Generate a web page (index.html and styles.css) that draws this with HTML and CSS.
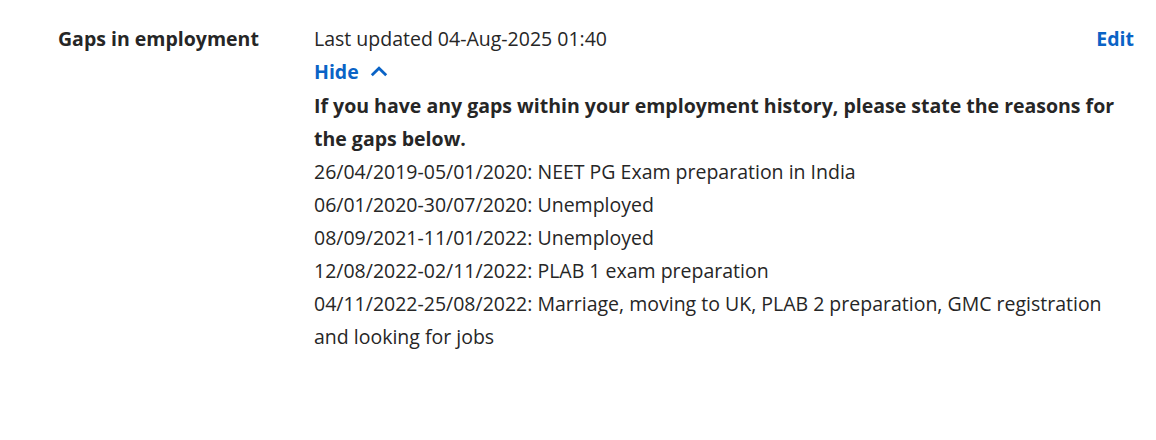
FILE: index.html
```html
<!DOCTYPE html>
<html lang="en">
<head>
<meta charset="utf-8">
<title>Gaps in employment</title>
<link rel="stylesheet" href="styles.css">
</head>
<body>
<dl class="summary">
  <div class="summary-row">
    <dt class="summary-key">Gaps in employment</dt>
    <dd class="summary-value">
      <div class="value-head">
        <span class="updated">Last updated 04-Aug-2025 01:40</span>
        <a class="link edit-link" href="#">Edit</a>
      </div>
      <a class="link toggle" href="#">Hide
        <svg class="chevron" width="18" height="11" viewBox="0 0 18 11" aria-hidden="true"><path d="M1.8 9.2 L9 2.2 L16.2 9.2" fill="none" stroke="currentColor" stroke-width="2.8" stroke-linecap="butt" stroke-linejoin="miter"/></svg>
      </a>
      <p class="question">If you have any gaps within your employment history, please state the reasons for the gaps below.</p>
      <ul class="gaps">
        <li>26/04/2019-05/01/2020: NEET PG Exam preparation in India</li>
        <li>06/01/2020-30/07/2020: Unemployed</li>
        <li>08/09/2021-11/01/2022: Unemployed</li>
        <li>12/08/2022-02/11/2022: PLAB 1 exam preparation</li>
        <li>04/11/2022-25/08/2022: Marriage, moving to UK, PLAB 2 preparation, GMC registration and looking for jobs</li>
      </ul>
    </dd>
  </div>
</dl>
</body>
</html>
```
FILE: styles.css
```css
* { box-sizing: border-box; }
html, body { margin: 0; padding: 0; background: #ffffff; }
body {
  font-family: "Open Sans", "Liberation Sans", Arial, sans-serif;
  font-size: 19.5px;
  line-height: 33px;
  color: #262626;
}
.summary { margin: 0; padding: 22px 22px 0 58px; }
.summary-row { display: flex; }
.summary-key {
  width: 256px;
  flex: none;
  font-weight: 700;
  margin: 0;
}
.summary-value { margin: 0; flex: 1; display: flex; flex-direction: column; align-items: flex-start; }
.value-head { display: flex; justify-content: space-between; align-self: stretch; }
.link { color: #0a63c6; font-weight: 700; text-decoration: none; }
.toggle { display: inline-flex; align-items: center; gap: 11px; }
.chevron { display: block; margin-top: -1px; }
.question { margin: 1px 0 0; font-weight: 700; }
.gaps { list-style: none; margin: 0; padding: 0; }
.gaps li { margin: 0; }
```
